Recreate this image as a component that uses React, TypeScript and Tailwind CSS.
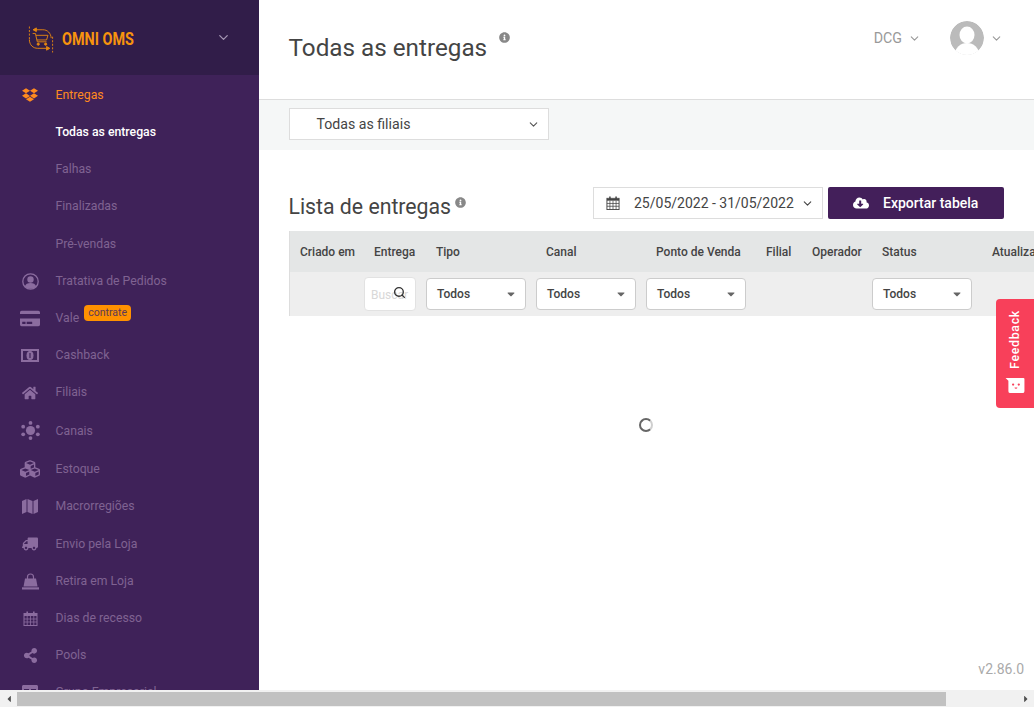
import { ChevronDown, Search } from "lucide-react";
import { ReactNode } from "react";
import {
  FaCaretDown,
  FaCaretLeft,
  FaCaretRight,
  FaCloudDownloadAlt,
  FaCreditCard,
  FaCubes,
  FaDropbox,
  FaHome,
  FaInfoCircle,
  FaShareAlt,
  FaTable,
  FaTruck,
} from "react-icons/fa";

function Logo() {
  return (
    <svg width="26" height="29" viewBox="0 0 28 30" fill="none" stroke="#e58610" strokeWidth="1" className="mt-[3px] shrink-0">
      <path d="M1.5 1v16" strokeDasharray="2.2 1.6" />
      <path d="M26.5 12v17" strokeDasharray="2.2 1.6" />
      <path d="M6 4.5h10c5 0 8.5 3.5 9 9" />
      <path d="M9 2.5 5.5 4.5 9 6.5z" fill="#e58610" />
      <path d="M1.5 15c0 6 4 9.5 9 9.5h10" />
      <path d="M20 22.5l3.5 2-3.5 2z" fill="#e58610" />
      <path d="M5 8.500h3l2 9h10" />
      <path d="M8.500 10.500h13l-1.500 5h-10.500" />
      <circle cx="11" cy="20" r="1.200" fill="#e58610" />
      <circle cx="19" cy="20" r="1.200" fill="#e58610" />
    </svg>
  );
}

function CalendarIcon({ size }: { size: number }) {
  return (
    <svg width={size} height={size} viewBox="0 0 14 15" fill="none" stroke="currentColor" strokeWidth="1">
      <rect x="0.500" y="2.500" width="13" height="12" />
      <path d="M0.500 4h13" strokeWidth="2" />
      <path d="M0.500 8h13M0.500 11h13M3.700 5v9M7 5v9M10.300 5v9" strokeWidth="0.800" />
      <path d="M3.700 0.500v3M10.300 0.500v3" strokeWidth="1.600" />
    </svg>
  );
}

function UserIcon() {
  return (
    <svg width="17" height="17" viewBox="0 0 17 17" fill="#8b6c9f">
      <circle cx="8.500" cy="8.500" r="7.700" fill="none" stroke="#8b6c9f" strokeWidth="1.300" />
      <circle cx="8.500" cy="6.500" r="3.200" />
      <path d="M2.800 13.500c.6-2.500 3-3.500 5.700-3.500s5.100 1 5.700 3.500c-3 3-8.400 3-11.400 0z" />
    </svg>
  );
}

function CashIcon() {
  return (
    <svg width="18" height="13" viewBox="0 0 18 13">
      <rect width="18" height="13" fill="#8b6c9f" />
      <rect x="2" y="2" width="14" height="9" fill="#3f2259" />
      <ellipse cx="9" cy="6.500" rx="3.500" ry="4.500" fill="#8b6c9f" />
      <path d="M9 4v5" stroke="#3f2259" strokeWidth="1.200" />
    </svg>
  );
}

function CanaisIcon() {
  return (
    <svg width="19" height="19" viewBox="0 0 20 20" fill="#8b6c9f">
      <circle cx="10" cy="10" r="4.800" />
      <circle cx="10" cy="2" r="2" />
      <circle cx="10" cy="18" r="2" />
      <circle cx="2.300" cy="6" r="2" />
      <circle cx="17.700" cy="6" r="2" />
      <circle cx="2.300" cy="14" r="2" />
      <circle cx="17.700" cy="14" r="2" />
    </svg>
  );
}

function MapIcon() {
  return (
    <svg width="16" height="17" viewBox="0 0 16 17" fill="#8b6c9f">
      <path d="M0 3 4.500 1v13L0 16z" />
      <path d="M5.500 1 10.500 3v13L5.500 14z" />
      <path d="M11.500 3 16 1v13l-4.500 2z" />
    </svg>
  );
}

function BagIcon() {
  return (
    <svg width="17" height="17" viewBox="0 0 17 17" fill="#8b6c9f">
      <path d="M5.500 6V4a3 3 0 0 1 6 0v2" fill="none" stroke="#8b6c9f" strokeWidth="1.200" />
      <path d="M3 5.500h11l1.500 8h-14z" />
      <rect y="14.300" width="17" height="2.200" />
    </svg>
  );
}

const menu: { label: string; icon: ReactNode; h: string; badge?: boolean }[] = [
  { label: "Tratativa de Pedidos", icon: <UserIcon />, h: "h-[38px]" },
  { label: "Vale", icon: <FaCreditCard size={21} />, h: "h-[36px]", badge: true },
  { label: "Cashback", icon: <CashIcon />, h: "h-[38px]" },
  { label: "Filiais", icon: <FaHome size={16} />, h: "h-[37px]" },
  { label: "Canais", icon: <CanaisIcon />, h: "h-[39.500px]" },
  { label: "Estoque", icon: <FaCubes size={20} />, h: "h-[37px]" },
  { label: "Macrorregiões", icon: <MapIcon />, h: "h-[37px]" },
  { label: "Envio pela Loja", icon: <FaTruck size={16} className="-scale-x-100" />, h: "h-[38px] pt-[1px]" },
  { label: "Retira em Loja", icon: <BagIcon />, h: "h-[37px]" },
  { label: "Dias de recesso", icon: <CalendarIcon size={15} />, h: "h-[37px]" },
  { label: "Pools", icon: <FaShareAlt size={15} />, h: "h-[37px]" },
  { label: "Grupo Empresarial", icon: <FaTable size={16} />, h: "h-[37px]" },
];

function Sidebar() {
  return (
    <aside className="flex h-full w-[259px] shrink-0 flex-col overflow-hidden bg-[#3f2259] text-[12.250px]">
      <div className="flex h-[75px] shrink-0 items-center bg-[#311d49] pl-[28px] pr-[28px]">
        <Logo />
        <span className="ml-[8px] mt-[2px] inline-block origin-left scale-x-[0.8] whitespace-nowrap text-[18px] font-bold text-[#f7930e]">
          OMNI OMS
        </span>
        <ChevronDown size={15} className="ml-auto text-[#a596b4]" />
      </div>
      <div className="h-[3px] shrink-0" />
      <div className="mb-[2px] flex h-[34px] shrink-0 items-center pl-[20px] text-[#ff8a1f]">
        <span className="flex w-5 justify-center">
          <FaDropbox size={16} />
        </span>
        <span className="ml-[15.500px]">Entregas</span>
      </div>
      {["Todas as entregas", "Falhas", "Finalizadas", "Pré-vendas"].map((label, i) => (
        <div
          key={label}
          className={`flex h-[37px] shrink-0 items-center pl-[55.500px] ${i === 0 ? "font-medium text-white" : "text-[#7f6392]"} ${i === 3 ? "pt-[1px]" : ""}`}
        >
          {label}
        </div>
      ))}
      {menu.map((item) => (
        <div key={item.label} className={`flex shrink-0 items-center pl-[20px] text-[#7f6392] ${item.h}`}>
          <span className="flex w-5 justify-center text-[#8b6c9f]">{item.icon}</span>
          <span className="ml-[15.500px]">{item.label}</span>
          {item.badge && (
            <span className="mb-[11px] ml-[5px] flex h-[16px] items-center rounded-[4px] bg-[#ff9100] px-[4px] text-[10.500px] text-[#5d3a58]">
              contrate
            </span>
          )}
        </div>
      ))}
    </aside>
  );
}

function FilterSelect() {
  return (
    <div className="flex h-[32px] w-[100px] items-center justify-between rounded-[4px] border border-[#ccc] bg-white pl-[10px] pr-[8px] text-[12px] font-medium text-[#444]">
      Todos
      <FaCaretDown size={12} className="text-[#666]" />
    </div>
  );
}

function ListTable() {
  const cols = "grid grid-cols-[74px_62px_110px_110px_110px_46px_70px_110px_110px]";
  const headers = ["Criado em", "Entrega", "Tipo", "Canal", "Ponto de Venda", "Filial", "Operador", "Status", "Atualização"];
  return (
    <div className="mt-[12px] ml-[30px] overflow-hidden border-l border-[#ddd]">
      <div className={`${cols} h-[41px] w-[803px] items-center bg-[#e4e6e6] text-[12px] font-medium text-[#444]`}>
        {headers.map((h) => (
          <div key={h} className="whitespace-nowrap pl-[10px]">
            {h}
          </div>
        ))}
      </div>
      <div className={`${cols} h-[44px] w-[803px] items-center bg-[#eeeeee]`}>
        <div />
        <div className="relative h-[34px] w-[52px] overflow-hidden rounded-[4px] border border-[#e2e2e2] bg-white pl-[6px] text-[12px] leading-[34px] text-[#d8d8d8]">
          Buscar
          <Search size={13} strokeWidth={2.500} className="absolute right-[9px] top-[8px] text-[#333]" />
        </div>
        <FilterSelect />
        <FilterSelect />
        <FilterSelect />
        <div />
        <div />
        <FilterSelect />
        <div />
      </div>
    </div>
  );
}

function Main() {
  return (
    <main className="relative flex h-full min-w-0 flex-1 flex-col overflow-hidden bg-white">
      <header className="flex h-[100px] shrink-0 items-start border-b border-[#dddddd] pl-[29.500px]">
        <h1 className="mt-[32px] text-[24.250px] leading-[32px] text-[#444]">Todas as entregas</h1>
        <FaInfoCircle size={11} className="ml-[12px] mt-[32px] text-[#888]" />
        <div className="ml-auto mt-[21px] flex h-[34px] items-center pr-[31px] text-[#999]">
          <span className="pt-[1px] text-[14.250px]">DCG</span>
          <ChevronDown size={13} className="ml-[6px]" />
          <svg width="34" height="34" viewBox="0 0 34 34" className="ml-[29px]">
            <clipPath id="avatar">
              <circle cx="17" cy="17" r="17" />
            </clipPath>
            <g clipPath="url(#avatar)">
              <circle cx="17" cy="17" r="17" fill="#bbbbbb" />
              <ellipse cx="17" cy="14" rx="7.500" ry="8.500" fill="#fff" />
              <ellipse cx="17" cy="33" rx="12" ry="11" fill="#fff" />
            </g>
          </svg>
          <ChevronDown size={13} className="ml-[6px]" />
        </div>
      </header>

      <div className="flex h-[50px] shrink-0 items-start bg-[#f5f7f7] pl-[30px] pt-[8px]">
        <div className="flex h-[32px] w-[260px] items-center justify-between border border-[#ddd] bg-white pl-[26.500px] pr-[8px] pt-[1px] text-[14.150px] text-[#444]">
          Todas as filiais
          <ChevronDown size={13} className="text-[#555]" />
        </div>
      </div>

      <div className="mt-[37px] flex h-[32px] shrink-0 items-center pl-[29.500px] pr-[30px]">
        <h2 className="mt-[8px] text-[21.250px] leading-[28px] text-[#444]">Lista de entregas</h2>
        <FaInfoCircle size={11} className="mb-[2px] ml-[4px] text-[#888]" />
        <div className="ml-auto flex h-[32px] w-[230px] items-center border border-[#ddd] bg-white pl-[12px] pr-[8px] text-[14px] text-[#444]">
          <CalendarIcon size={14} />
          <span className="ml-[14px]">25/05/2022 - 31/05/2022</span>
          <ChevronDown size={13} className="ml-auto" />
        </div>
        <button className="ml-[5px] flex h-[32px] w-[176px] items-center rounded-[2px] bg-[#431f5a] pl-[25px] text-[14px] font-medium text-white">
          <FaCloudDownloadAlt size={16} />
          <span className="ml-[14px]">Exportar tabela</span>
        </button>
      </div>

      <ListTable />

      <div className="mt-[102px] flex justify-center pr-[1px]">
        <div className="h-[14px] w-[14px] rounded-full border-[2px] border-[#666] border-r-[#cfcfcf]" />
      </div>

      <div className="mt-auto pb-[10px] pr-[10px] text-right text-[14px] text-[#aaa]">v2.86.0</div>

      <div className="absolute right-0 top-[299px] flex h-[109px] w-[38px] flex-col items-center rounded-l-[4px] bg-[#f8405a] pt-[11px] text-white">
        <span className="rotate-180 text-[12.250px] font-medium tracking-[0.750px] [writing-mode:vertical-rl]">Feedback</span>
        <svg width="20" height="17" viewBox="0 0 20 18" className="mt-[8px]">
          <path d="M0 1l19 0a1 1 0 0 1 1 1v13a2 2 0 0 1-2 2H5a2 2 0 0 1-2-2V4z" fill="#fff" />
          <circle cx="8" cy="8" r="1.200" fill="#f8405a" />
          <circle cx="14" cy="8" r="1.200" fill="#f8405a" />
          <path d="M9.500 11h3a1.500 1.500 0 0 1-3 0z" fill="#f8405a" />
        </svg>
      </div>
    </main>
  );
}

function ScrollBar() {
  return (
    <div className="flex h-[17px] shrink-0 items-center bg-[#f1f1f1] text-[#505050]">
      <span className="flex w-[17px] justify-center">
        <FaCaretLeft size={10} />
      </span>
      <div className="h-[14px] w-[929px] bg-[#c1c1c1]" />
      <span className="ml-auto flex w-[17px] justify-center">
        <FaCaretRight size={10} />
      </span>
    </div>
  );
}

export default function App() {
  return (
    <div className="flex h-[707px] w-[1034px] flex-col overflow-hidden font-['Roboto',sans-serif]">
      <div className="flex min-h-0 flex-1">
        <Sidebar />
        <Main />
      </div>
      <ScrollBar />
    </div>
  );
}
